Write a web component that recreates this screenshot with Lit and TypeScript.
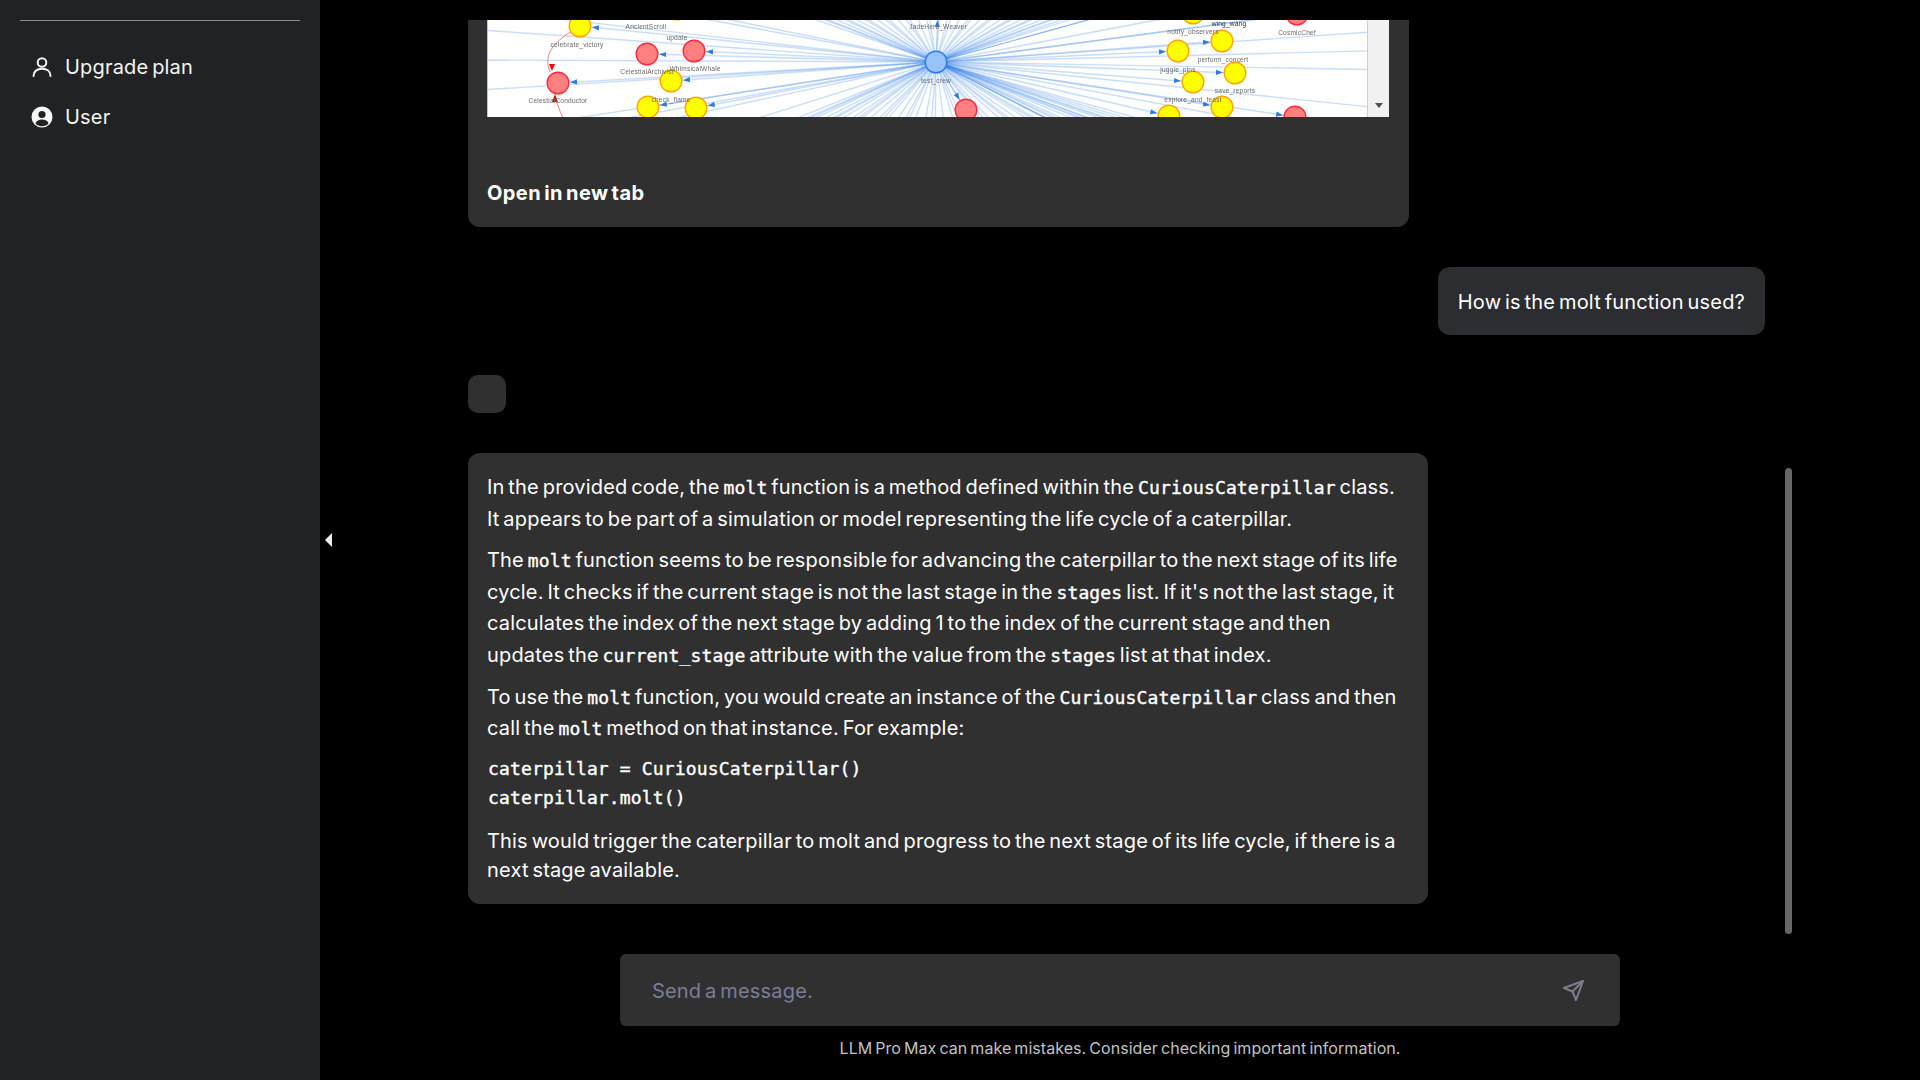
import { LitElement, html, css, svg } from "lit";
import { customElement } from "lit/decorators.js";

type N = [number, number, "y" | "r" | "b"];
const nodes: N[] = [
  [580, 26, "y"], [646, 8, "r"], [677, 9, "y"], [647, 54, "r"], [694, 51, "r"], [558, 83, "r"], [671, 81, "y"],
  [648, 107, "y"], [696, 108, "y"], [1193, 13, "y"], [1297, 14, "r"], [1178, 51, "y"], [1222, 41, "y"],
  [1235, 73, "y"], [1193, 82, "y"], [1169, 116, "y"], [1222, 107, "y"], [966, 110, "r"], [1295, 117, "r"], [938, 8, "y"],
  [936, 62, "b"],
];
const labels: [number, number, string, string?][] = [
  [577, 45, "celebrate_victory"], [646, 27, "AncientScroll"], [677, 38, "update"], [647, 72, "CelestialArchivist"],
  [695, 69, "WhimsicalWhale"], [558, 101, "CelestialConductor"], [671, 100, "check_flame"], [1229, 24, "wing_wang", "#2a2a2a"],
  [1297, 33, "CosmicChef"], [1193, 32, "notify_observers"], [1223, 60, "perform_concert"], [1178, 70, "juggle_pins"],
  [1235, 91, "save_reports"], [1193, 100, "explore_and_feast"], [936, 81, "test_crew"], [938, 27, "JadeHerb_Weaver"],
];
const HX = 936, HY = 62;
const fanTargets: [number, number][] = [];
for (let i = 0; i < 38; i++) fanTargets.push([760 + i * 10 + 3 * Math.sin(i * 2.1), 0]);
for (let i = 0; i < 50; i++) fanTargets.push([780 + i * 7.5 + 2.5 * Math.sin(i * 1.7), 125]);
for (const [x, y] of [[480, 10], [480, 30], [480, 60], [480, 90], [500, 130], [560, 130], [620, 130], [720, 130], [1400, 0], [1400, 30], [1400, 50], [1400, 70], [1400, 110], [1300, 130], [1180, 130], [1120, 130]] as [number, number][])
  fanTargets.push([x, y]);

const colours = {
  y: ["#ffff00", "#ffa500"],
  r: ["#ff8080", "#ff2a3c"],
  b: ["#97c2fc", "#2b7ce9"],
};

const graph = () => svg`
  <svg class="graph" viewBox="488 20 879 97" width="879" height="97" preserveAspectRatio="none">
    <rect x="488" y="20" width="879" height="97" fill="#fff"></rect>
    ${fanTargets.map(([x, y]) => svg`<line x1=${HX} y1=${HY} x2=${x} y2=${y} stroke="#2b7ce9" stroke-opacity="0.25" stroke-width="1.4"></line>`)}
    ${nodes.filter((n) => n[2] !== "b").map(([x, y]) => svg`<line x1=${HX} y1=${HY} x2=${x} y2=${y} stroke="#2b7ce9" stroke-opacity="0.25" stroke-width="1.6"></line>`)}
    <line x1=${HX} y1=${HY} x2="1160" y2="0" stroke="#2b7ce9" stroke-opacity="0.6" stroke-width="1.2"></line>
    <line x1=${HX} y1=${HY} x2="1060" y2="125" stroke="#2b7ce9" stroke-opacity="0.6" stroke-width="1.2"></line>
    <path d="M550 72 Q 540 50 572 31" fill="none" stroke="#ff8080" stroke-width="1"></path>
    <path d="M555 98 Q 560 112 566 125" fill="none" stroke="#ff8080" stroke-width="1"></path>
    <path d="M549 64 L 555 64 L 552 71 Z" fill="#ff0000"></path>
    <path d="M552 102 L 555 94 L 558 102 Z" fill="#ff0000"></path>
    ${nodes.filter((n) => n[2] !== "b").map(([x, y]) => {
      const dx = HX - x, dy = HY - y, l = Math.hypot(dx, dy), ux = dx / l, uy = dy / l;
      const bx = x + ux * 12, by = y + uy * 12, tx = bx + ux * 7, ty = by + uy * 7;
      return svg`<path d="M${bx} ${by} L${tx - uy * 2.6} ${ty + ux * 2.6} L${tx + uy * 2.6} ${ty - ux * 2.6} Z" fill="#2b7ce9"></path>`;
    })}
    ${nodes.map(([x, y, k]) => svg`<circle cx=${x} cy=${y} r="10.8" fill=${colours[k][0]} stroke=${colours[k][1]} stroke-width="1.4"></circle>`)}
    ${labels.map(([x, y, t, c]) => svg`<text x=${x} y=${y + 2} text-anchor="middle" font-family="Liberation Sans, sans-serif" font-size="6.6" fill=${c ?? "#6b6b6b"}>${t}</text>`)}
  </svg>`;

@customElement("app-root")
export class AppRoot extends LitElement {
  static styles = css`
    :host { display: block; height: 1080px; width: 1920px; overflow: hidden; background: #000; color: #fff;
      font-family: Inter, "Open Sans", sans-serif; font-size: 20px; letter-spacing: 0.18px; word-spacing: -2px; }
    * { box-sizing: border-box; }
    .app { display: flex; height: 100%; }
    .sidebar { width: 320px; flex: none; background: #212224; padding: 20px; }
    .rule { height: 1px; background: #8a8a8a; margin-bottom: 21px; }
    .side-item { display: flex; align-items: center; gap: 11px; height: 50px; padding-left: 10px; color: #f4f4f4; }
    .side-item svg { flex: none; }
    .main { flex: 1; position: relative; display: flex; flex-direction: column; min-width: 0; }
    .messages { height: 934px; margin-top: 20px; padding-left: 148px; width: 1445px; overflow: hidden;
      display: flex; flex-direction: column; gap: 40px; align-items: flex-start; flex: none; }
    .card { background: #303030; }
    .graph-card { width: 941px; padding: 0 20px 19px; border-radius: 0 0 12px 12px; }
    .frame { display: flex; height: 97px; margin-left: -1px; border-left: 1px solid #c4c4c4; background: #fff; }
    .graph { display: block; flex: none; filter: blur(0.55px); }
    .sbar { width: 22px; flex: none; background: #f1f1f1; border-left: 1px solid #cfcfcf; position: relative; }
    .sbar::after { content: ""; position: absolute; left: 7px; bottom: 9px; border: 4.5px solid transparent;
      border-top: 5px solid #505050; border-bottom: 0; }
    .open { margin: 61px 0 0 -1px; font-weight: 700; line-height: 30px; letter-spacing: 0.42px; }
    .bubble { align-self: flex-end; background: #2c2d30; border-radius: 12px; height: 68px; padding: 1px 20px 0;
      display: flex; align-items: center; }
    .avatar { width: 38px; height: 38px; border-radius: 10px; background: #303030; flex: none; }
    .reply { width: 960px; border-radius: 12px; padding: 19px 20px 18px 19px; flex: none; }
    .reply p { margin: 0 0 10px; white-space: nowrap; line-height: 31.6px; }
    .reply p.third { margin-bottom: 9px; }
    .reply p.last { margin: 14px 0 0; line-height: 29.5px; }
    code { font-family: "DejaVu Sans Mono", monospace; font-size: 18px; font-weight: 400; letter-spacing: 0.15px;
      word-spacing: 0; -webkit-text-stroke: 0.4px #fff; }
    .block { font-family: "DejaVu Sans Mono", monospace; font-size: 18px; font-weight: 400; line-height: 29.5px;
      white-space: pre; letter-spacing: 0.15px; word-spacing: 0; -webkit-text-stroke: 0.4px #fff; margin-left: 1px; }
    .composer { width: 1000px; align-self: center; }
    .field { height: 72px; background: #303030; border-radius: 6px; display: flex; align-items: center;
      justify-content: space-between; padding: 0 35px 0 32px; color: #7b7d99; }
    .field span { padding-top: 2px; }
    .hint { text-align: center; font-size: 16px; color: #c2c2c2; line-height: 44px; letter-spacing: 0.05px; word-spacing: -1.5px; }
    .thumb { position: absolute; left: 1465px; top: 468px; width: 7px; height: 466px; border-radius: 4px; background: #666; }
    .collapse { position: absolute; left: 5px; top: 533px; width: 0; height: 0; border-style: solid;
      border-width: 7.5px 7px 7.5px 0; border-color: transparent #eeeef2 transparent transparent; }
  `;

  render() {
    return html`<div class="app">
      <aside class="sidebar">
        <div class="rule"></div>
        <div class="side-item">
          <svg width="24" height="24" viewBox="0 0 24 24" fill="none" stroke="#f4f4f4" stroke-width="2" stroke-linecap="round">
            <circle cx="12" cy="7.500" r="4.300"></circle><path d="M3.500 21c0-4.600 3.600-7.300 8.500-7.300s8.500 2.700 8.500 7.300"></path>
          </svg>
          <span>Upgrade plan</span>
        </div>
        <div class="side-item">
          <svg width="24" height="24" viewBox="0 0 24 24">
            <circle cx="12" cy="12" r="10.500" fill="#f6f6f6"></circle>
            <circle cx="12" cy="9.500" r="3.600" fill="#212224"></circle>
            <path d="M5.500 18.500c1-3 3.500-4 6.500-4s5.500 1 6.500 4c-1.500 1.700-3.800 2.800-6.500 2.800s-5-1.100-6.500-2.800z" fill="#212224"></path>
          </svg>
          <span>User</span>
        </div>
      </aside>
      <main class="main">
        <div class="messages">
          <section class="card graph-card">
            <div class="frame">${graph()}<div class="sbar"></div></div>
            <div class="open">Open in new tab</div>
          </section>
          <div class="bubble">How is the molt function used?</div>
          <div class="avatar"></div>
          <section class="card reply">
            <p>In the provided code, the <code>molt</code> function is a method defined within the <code>CuriousCaterpillar</code> class.<br>It appears to be part of a simulation or model representing the life cycle of a caterpillar.</p>
            <p>The <code>molt</code> function seems to be responsible for advancing the caterpillar to the next stage of its life<br>cycle. It checks if the current stage is not the last stage in the <code>stages</code> list. If it's not the last stage, it<br>calculates the index of the next stage by adding 1 to the index of the current stage and then<br>updates the <code>current_stage</code> attribute with the value from the <code>stages</code> list at that index.</p>
            <p class="third">To use the <code>molt</code> function, you would create an instance of the <code>CuriousCaterpillar</code> class and then<br>call the <code>molt</code> method on that instance. For example:</p>
            <div class="block">caterpillar = CuriousCaterpillar()
caterpillar.molt()</div>
            <p class="last">This would trigger the caterpillar to molt and progress to the next stage of its life cycle, if there is a<br>next stage available.</p>
          </section>
        </div>
        <div class="composer">
          <div class="field">
            <span>Send a message.</span>
            <svg width="24" height="24" viewBox="0 0 24 24" fill="none" stroke="#7b7d8c" stroke-width="2" stroke-linejoin="round">
              <path d="M22 3 3 10l8.500 3.500L15 22z"></path><path d="M11.500 13.500 22 3"></path>
            </svg>
          </div>
          <div class="hint">LLM Pro Max can make mistakes. Consider checking important information.</div>
        </div>
        <div class="thumb"></div>
        <div class="collapse"></div>
      </main>
    </div>`;
  }
}
